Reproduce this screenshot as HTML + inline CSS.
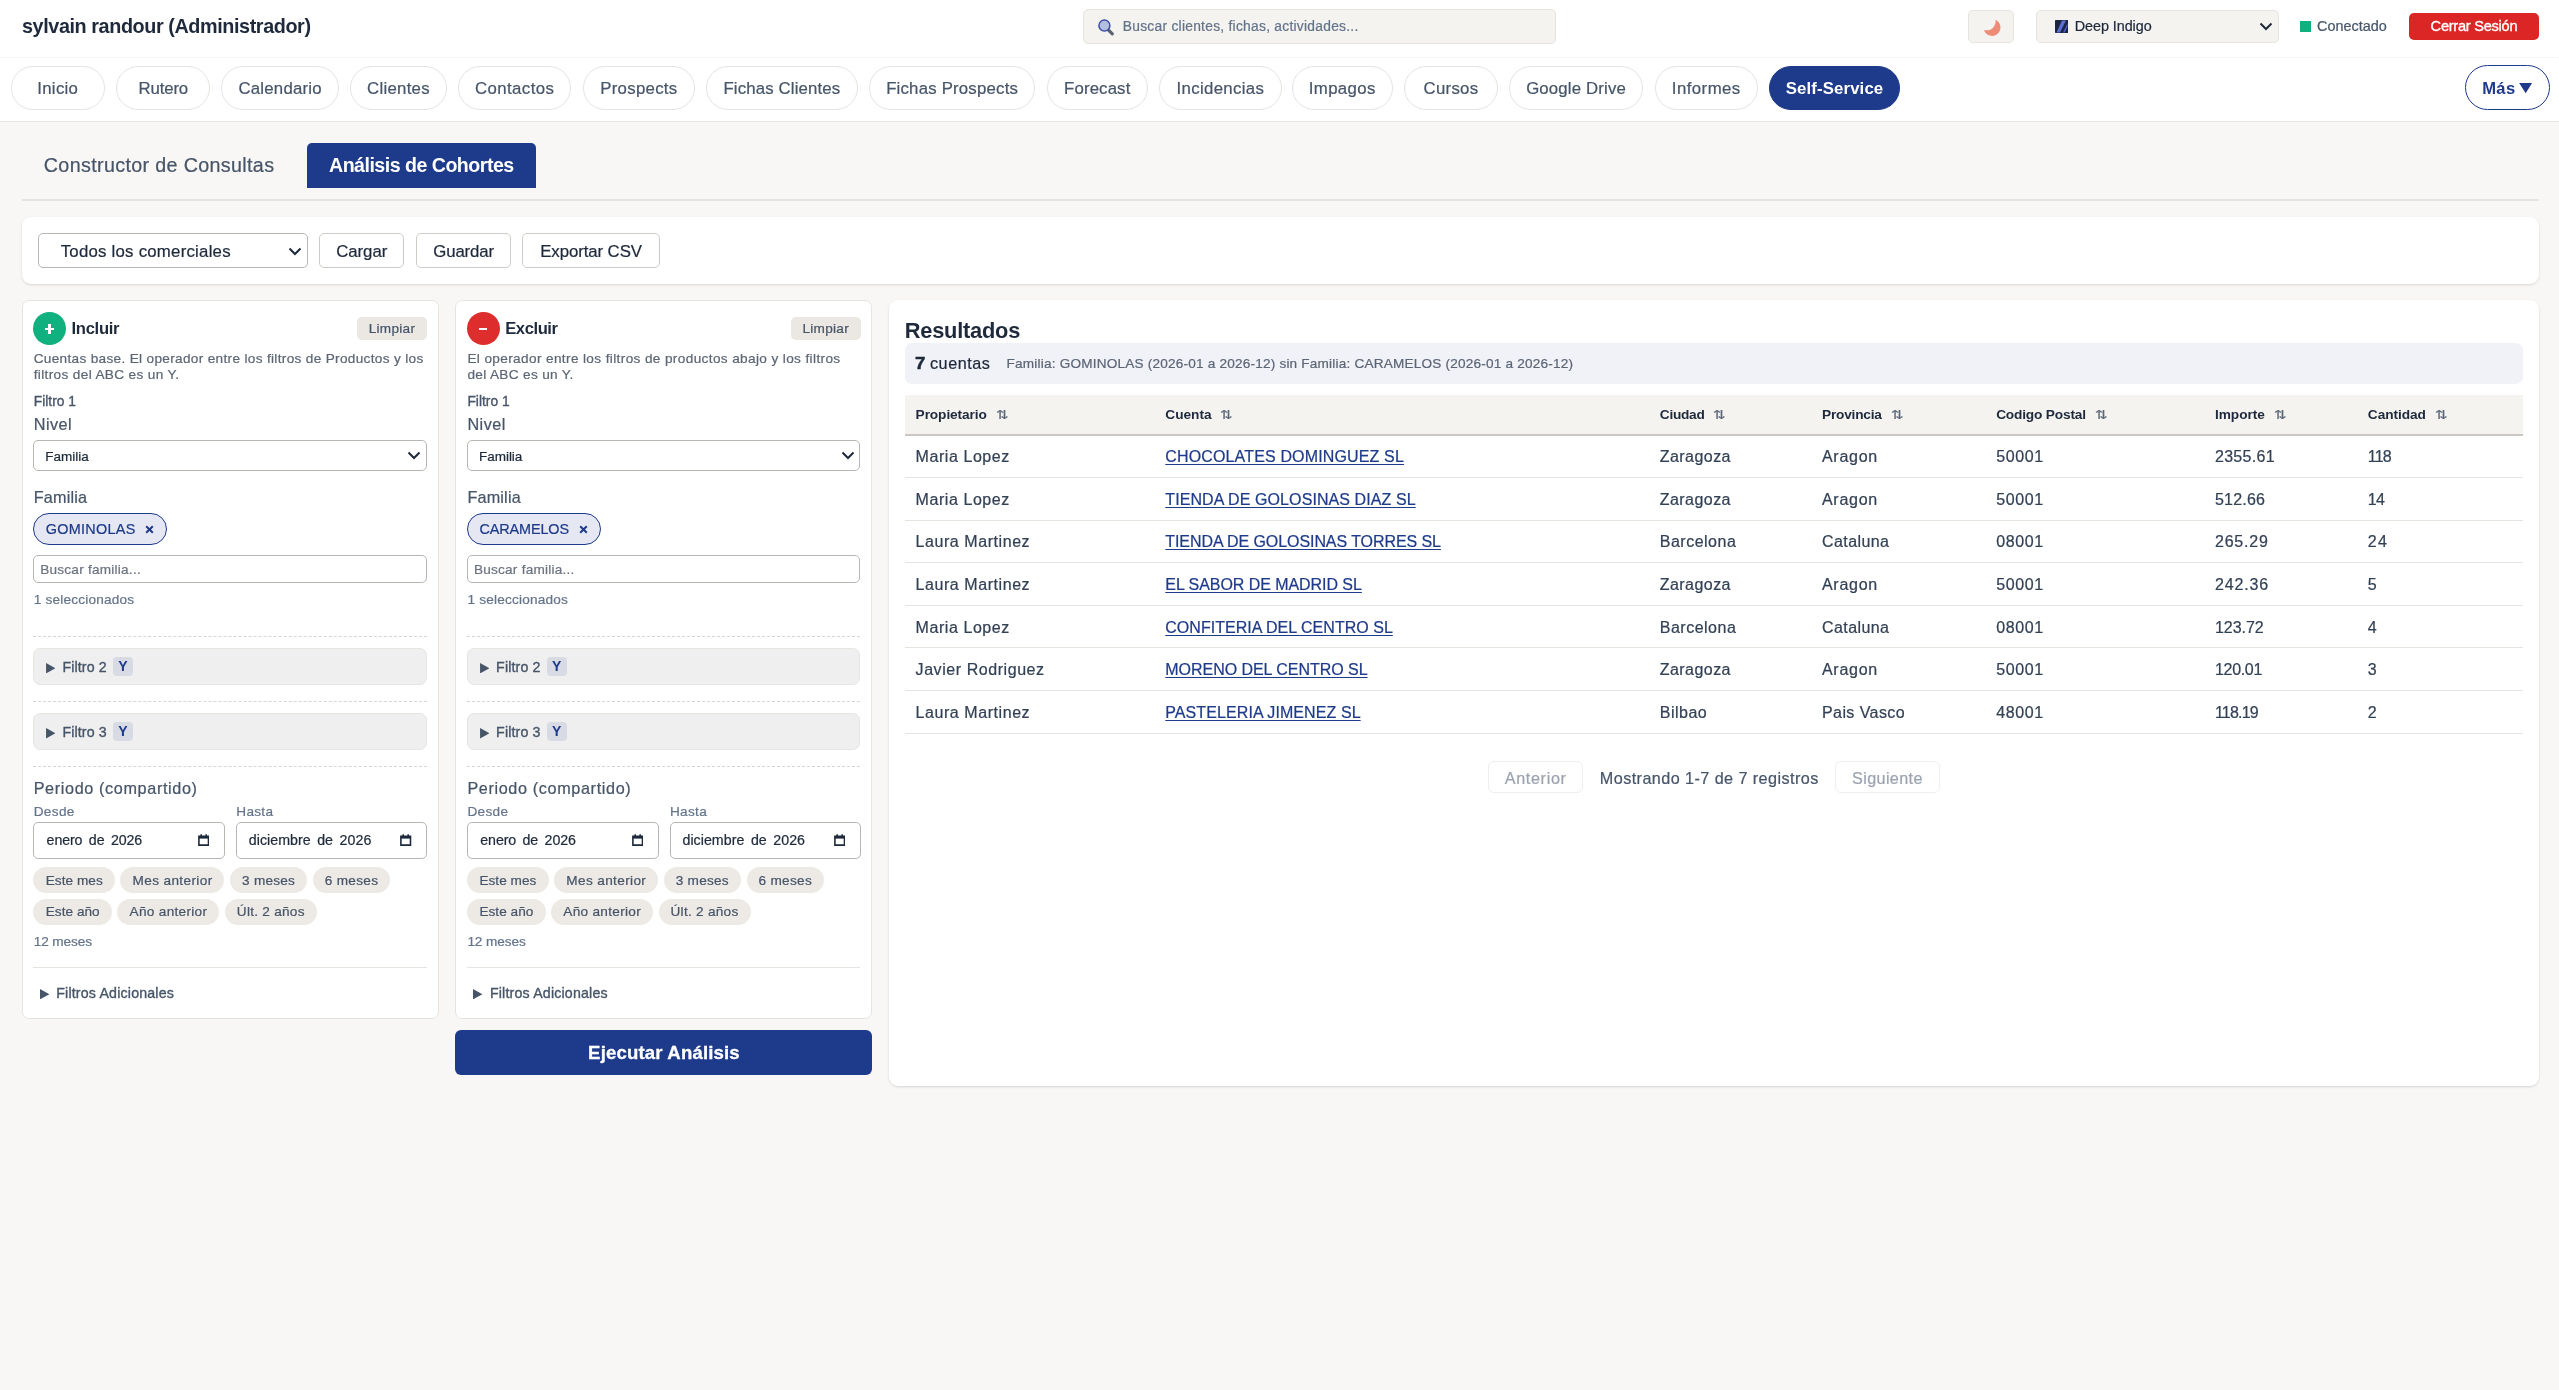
<!DOCTYPE html>
<html lang="es">
<head>
<meta charset="utf-8">
<title>Self-Service - Análisis de Cohortes</title>
<style>
*{box-sizing:border-box;margin:0;padding:0}
html,body{width:2559px;height:1390px;overflow:hidden}
body{background:#f8f7f5;font-family:"Liberation Sans",sans-serif;color:#1e293b;position:relative}
#app{position:absolute;left:0;top:0;width:2559px;height:1390px;will-change:transform;-webkit-text-stroke:0.22px currentColor}
h1,h2,h3,b,th,.pill.active,.pill.more,.ybadge,.nb{-webkit-text-stroke:0}
.abs{position:absolute}
.md{-webkit-text-stroke:0.35px currentColor}
header.top{position:absolute;left:0;top:0;width:2559px;height:58px;background:#fff;border-bottom:1px dotted #f1efec}
nav.main{position:absolute;left:0;top:58px;width:2559px;height:64px;background:#fff;border-bottom:1.5px solid #e7e4df}
.pill{position:absolute;top:8px;height:44px;border:1.5px solid #e7e4df;border-radius:22px;background:#fff;color:#475569;font-size:16.8px;line-height:43px;text-align:center;white-space:pre;text-decoration:none}
.pill.active{background:#1e3a8a;border-color:#1e3a8a;color:#fff;font-weight:700}
.pill.more{border:1.5px solid #1e3a8a;border-radius:23px;color:#1e3a8a;font-weight:700}
.box{position:absolute;background:#f5f3f0;border:1px solid #e7e4df;border-radius:5px}
.btn{position:absolute;background:#fff;border:1px solid #cfccc7;border-radius:5px;text-align:center;color:#1e293b;white-space:pre}
.card{position:absolute;background:#fff;border-radius:9px;box-shadow:0 1px 3px rgba(0,0,0,.10),0 1px 2px rgba(0,0,0,.05)}
.panel{position:absolute;background:#fff;border:1px solid #e7e4df;border-radius:7px}
.sel{position:absolute;background:#fff;border:1px solid #b9b6b1;border-radius:5px}
.chip{position:absolute;height:26px;border-radius:13px;background:#edeae6;color:#475569;font-size:13.6px;line-height:26px;text-align:center;white-space:pre}
.dash{position:absolute;height:0;border-top:1px dashed #d9d6d1}
.fbox{position:absolute;background:#efefef;border:1px solid #e9e5e1;border-radius:7px}
.ybadge{position:absolute;background:#d8dae4;border-radius:4px;color:#1e3a8a;font-weight:700;font-size:14px;text-align:center}
table.res{position:absolute;border-collapse:collapse;table-layout:fixed}
table.res th{background:#f4f3f0;text-align:left;font-size:13.7px;font-weight:700;color:#1e293b;height:40px;padding:0 0 0 10.6px;border-bottom:2px solid #cbc8c3;white-space:pre}
table.res td{font-size:16px;color:#334155;height:42.6px;padding:2px 0 0 10.6px;border-bottom:1px solid #e7e4df;white-space:pre}
table.res td a{color:#1e3a8a;text-decoration:underline;text-underline-offset:1.5px}
.sort{display:inline-block;color:#5b6678;font-weight:400;font-size:15px;line-height:1;margin-left:8.8px;transform:scaleY(.8);transform-origin:50% 55%;-webkit-text-stroke:0.25px #5b6678;vertical-align:-1px}
</style>
</head>
<body>
<div id="app">

<header class="top">
<h1 class="nb" style="position:absolute;left:22.0px;top:12.3px;height:28px;line-height:28px;font-size:19.8px;font-weight:700;color:#1e293b;letter-spacing:-0.406px;white-space:pre;">sylvain randour (Administrador)</h1>
<div class="box" style="left:1083px;top:9px;width:473px;height:35px"></div>
<svg class="abs" style="left:1096px;top:17px" width="20" height="20" viewBox="0 0 20 20"><path d="M12.3 12.8 L16.3 16.8" stroke="#5a6273" stroke-width="3.2" stroke-linecap="round"/><circle cx="8.4" cy="8.6" r="5.5" fill="#b4bedd" stroke="#3d51a8" stroke-width="1.5"/></svg>
<span style="position:absolute;left:1122.8px;top:16.6px;height:19px;line-height:19px;font-size:13.8px;font-weight:400;color:#64748b;letter-spacing:0.264px;white-space:pre;">Buscar clientes, fichas, actividades...</span>
<div class="box" style="left:1968px;top:10px;width:45.5px;height:33px"></div>
<svg class="abs" style="left:1980px;top:16px" width="24" height="24" viewBox="1980 16 24 24"><path d="M1995.4 19.8 A8.4 8.4 0 1 1 1984 29.9 A8.8 8.8 0 0 0 1995.4 19.8 Z" fill="#ef8c78"/></svg>
<div class="box" style="left:2036px;top:10px;width:243px;height:33px"></div>
<svg class="abs" style="left:2055px;top:20px" width="13.2" height="13" viewBox="0 0 13.2 13"><rect width="13.2" height="13" rx="0.8" fill="#1c2440"/><path d="M1.5 12.5 L7 0.5 L11 0.5 L5 12.5 Z" fill="#5b70d2"/><path d="M8 12.5 L12.6 3 L12.6 6.5 L9.8 12.5 Z" fill="#4a5fc4"/></svg>
<span style="position:absolute;left:2074.7px;top:16.3px;height:20px;line-height:20px;font-size:14.4px;font-weight:400;color:#1e293b;letter-spacing:-0.062px;white-space:pre;">Deep Indigo</span>
<svg class="abs" style="left:2259px;top:22px" width="14" height="9" viewBox="0 0 14 9"><path d="M1.5 1.5 L7 7 L12.5 1.5" fill="none" stroke="#1e293b" stroke-width="2"/></svg>
<div class="abs" style="left:2300px;top:21.3px;width:10.8px;height:10.4px;background:#10b17e"></div>
<span style="position:absolute;left:2317.0px;top:16.3px;height:20px;line-height:20px;font-size:14.4px;font-weight:400;color:#475569;letter-spacing:0.024px;white-space:pre;">Conectado</span>
<div class="abs" style="left:2409px;top:13px;width:130px;height:26.7px;background:#dc2626;border-radius:5px"></div>
<span class="md" style="position:absolute;left:2430.6px;top:16.3px;height:20px;line-height:20px;font-size:14.6px;font-weight:400;color:#fff;letter-spacing:-0.253px;white-space:pre;">Cerrar Sesión</span>
</header>
<nav class="main">
<a class="pill" style="left:11px;width:93.5px;letter-spacing:0.312px">Inicio</a>
<a class="pill" style="left:116.25px;width:94.0px;letter-spacing:-0.125px">Rutero</a>
<a class="pill" style="left:221px;width:118.25px;letter-spacing:0.203px">Calendario</a>
<a class="pill" style="left:350px;width:97px;letter-spacing:0.266px">Clientes</a>
<a class="pill" style="left:458px;width:113.25px;letter-spacing:0.43px">Contactos</a>
<a class="pill" style="left:583.25px;width:111.25px;letter-spacing:0.297px">Prospects</a>
<a class="pill" style="left:706.25px;width:151.25px;letter-spacing:0.145px">Fichas Clientes</a>
<a class="pill" style="left:869.25px;width:165.75px;letter-spacing:0.203px">Fichas Prospects</a>
<a class="pill" style="left:1047px;width:100.5px;letter-spacing:0.136px">Forecast</a>
<a class="pill" style="left:1159.25px;width:122.25px;letter-spacing:0.353px">Incidencias</a>
<a class="pill" style="left:1292px;width:100.5px;letter-spacing:0.354px">Impagos</a>
<a class="pill" style="left:1404px;width:94px;letter-spacing:0.269px">Cursos</a>
<a class="pill" style="left:1509px;width:134.25px;letter-spacing:0.165px">Google Drive</a>
<a class="pill" style="left:1655px;width:102.5px;letter-spacing:0.458px">Informes</a>
<a class="pill active" style="left:1769px;width:131px;letter-spacing:0.128px">Self-Service</a>
<a class="pill more" style="left:2465px;width:85px;top:6.8px;height:45.2px"></a>
<span class="nb" style="position:absolute;left:2482.2px;top:19.3px;height:23px;line-height:23px;font-size:16.6px;font-weight:700;color:#1e3a8a;letter-spacing:0.359px;white-space:pre;">Más</span>
<span class="nb" style="position:absolute;left:2514.8px;top:17.8px;height:20px;line-height:20px;font-size:22px;color:#1e3a8a;transform:scaleY(.8);transform-origin:50% 85%">▼</span>
</nav>
<span style="position:absolute;left:43.8px;top:150.8px;height:28px;line-height:28px;font-size:19.7px;font-weight:400;color:#475569;letter-spacing:0.35px;white-space:pre;">Constructor de Consultas</span>
<div class="abs" style="left:307px;top:143.2px;width:229px;height:44.6px;background:#1e3a8a;border-radius:5px 5px 0 0"></div>
<span class="nb" style="position:absolute;left:329.0px;top:151.9px;height:27px;line-height:27px;font-size:19.6px;font-weight:700;color:#fff;letter-spacing:-0.511px;white-space:pre;">Análisis de Cohortes</span>
<div class="abs" style="left:22px;top:199px;width:2516.5px;height:2px;background:#e7e4df"></div>
<div class="card" style="left:22px;top:217px;width:2516.5px;height:66.5px"></div>
<div class="sel" style="left:38.3px;top:233.4px;width:269.4px;height:34.3px"></div>
<span style="position:absolute;left:60.7px;top:239.6px;height:24px;line-height:24px;font-size:16.8px;font-weight:400;color:#1e293b;letter-spacing:0.24px;white-space:pre;">Todos los comerciales</span>
<svg class="abs" style="left:288px;top:246.5px" width="14" height="9" viewBox="0 0 14 9"><path d="M1.5 1.5 L7 7 L12.5 1.5" fill="none" stroke="#1e293b" stroke-width="2"/></svg>
<div class="btn" style="left:319.2px;top:233.4px;width:85.3px;height:34.3px"></div>
<span style="position:absolute;left:336.2px;top:239.6px;height:24px;line-height:24px;font-size:16.8px;font-weight:400;color:#1e293b;letter-spacing:-0.039px;white-space:pre;">Cargar</span>
<div class="btn" style="left:416.3px;top:233.4px;width:95.2px;height:34.3px"></div>
<span style="position:absolute;left:433.3px;top:239.6px;height:24px;line-height:24px;font-size:16.8px;font-weight:400;color:#1e293b;letter-spacing:-0.144px;white-space:pre;">Guardar</span>
<div class="btn" style="left:522.2px;top:233.4px;width:137.5px;height:34.3px"></div>
<span style="position:absolute;left:540.2px;top:239.6px;height:24px;line-height:24px;font-size:16.8px;font-weight:400;color:#1e293b;letter-spacing:-0.072px;white-space:pre;">Exportar CSV</span>
<section class="panel" style="left:22px;top:300px;width:417px;height:718.5px"></section>
<div class="abs" style="left:32.9px;top:312px;width:33px;height:33px;border-radius:50%;background:#10b17e"></div>
<div class="abs" style="left:44.6px;top:327.6px;width:9.6px;height:2.6px;background:#fff"></div><div class="abs" style="left:48.1px;top:324.1px;width:2.6px;height:9.6px;background:#fff"></div>
<h3 class="nb" style="position:absolute;left:71.5px;top:316.8px;height:23px;line-height:23px;font-size:16.6px;font-weight:700;color:#1e293b;letter-spacing:-0.299px;white-space:pre;">Incluir</h3>
<div class="abs" style="left:357px;top:317.3px;width:70px;height:22.6px;background:#ebe8e3;border-radius:5px"></div>
<span style="position:absolute;left:368.7px;top:319.0px;height:19px;line-height:19px;font-size:13.6px;font-weight:400;color:#475569;letter-spacing:0.287px;white-space:pre;">Limpiar</span>
<span style="position:absolute;left:33.7px;top:348.8px;height:19px;line-height:19px;font-size:13.6px;font-weight:400;color:#5c6676;letter-spacing:0.328px;white-space:pre;">Cuentas base. El operador entre los filtros de Productos y los</span>
<span style="position:absolute;left:33.7px;top:364.8px;height:19px;line-height:19px;font-size:13.6px;font-weight:400;color:#5c6676;letter-spacing:0.36px;white-space:pre;">filtros del ABC es un Y.</span>
<span class="md" style="position:absolute;left:33.7px;top:391.5px;height:19px;line-height:19px;font-size:13.8px;font-weight:400;color:#475569;letter-spacing:0.018px;white-space:pre;">Filtro 1</span>
<span style="position:absolute;left:33.7px;top:413.0px;height:23px;line-height:23px;font-size:16.2px;font-weight:400;color:#475569;letter-spacing:0.504px;white-space:pre;">Nivel</span>
<div class="sel" style="left:33.2px;top:440px;width:393.5px;height:30.6px"></div>
<span style="position:absolute;left:45.2px;top:446.7px;height:19px;line-height:19px;font-size:13.5px;font-weight:400;color:#1e293b;letter-spacing:-0.003px;white-space:pre;">Familia</span>
<svg class="abs" style="left:407px;top:451.2px" width="14" height="9" viewBox="0 0 14 9"><path d="M1.5 1.5 L7 7 L12.5 1.5" fill="none" stroke="#1e293b" stroke-width="2"/></svg>
<span style="position:absolute;left:33.7px;top:485.8px;height:23px;line-height:23px;font-size:16.2px;font-weight:400;color:#475569;letter-spacing:0.188px;white-space:pre;">Familia</span>
<div class="abs" style="left:32.9px;top:513px;width:134.1px;height:31.7px;border:1.5px solid #1e3a8a;border-radius:16px;background:#e5e7f3"></div>
<span style="position:absolute;left:45.7px;top:518.6px;height:20px;line-height:20px;font-size:14.4px;font-weight:400;color:#1e3a8a;letter-spacing:0.316px;white-space:pre;">GOMINOLAS</span>
<svg class="abs" style="left:144.8px;top:525.4px" width="9" height="9" viewBox="0 0 9 9"><path d="M1.2 1.2 L7.8 7.8 M7.8 1.2 L1.2 7.8" stroke="#1e3a8a" stroke-width="2"/></svg>
<div class="sel" style="left:33.2px;top:555.3px;width:393.5px;height:27.3px"></div>
<span style="position:absolute;left:40.2px;top:559.5px;height:19px;line-height:19px;font-size:13.6px;font-weight:400;color:#6b7280;letter-spacing:0.237px;white-space:pre;">Buscar familia...</span>
<span style="position:absolute;left:33.7px;top:589.7px;height:19px;line-height:19px;font-size:13.6px;font-weight:400;color:#64748b;letter-spacing:0.207px;white-space:pre;">1 seleccionados</span>
<div class="dash" style="left:33.2px;top:636px;width:393.5px"></div>
<div class="fbox" style="left:33.2px;top:648.1px;width:393.5px;height:36.8px"></div>
<svg class="abs" style="left:45.8px;top:663.1px" width="9.6" height="10.4" viewBox="0 0 10 11"><path d="M0 0 L10 5.5 L0 11 Z" fill="#475569"/></svg>
<span class="md" style="position:absolute;left:62.4px;top:657.3px;height:20px;line-height:20px;font-size:14.2px;font-weight:400;color:#475569;letter-spacing:0.134px;white-space:pre;">Filtro 2</span>
<div class="ybadge" style="left:112.9px;top:657.3000000000001px;width:20px;height:18.8px;line-height:18.8px">Y</div>
<div class="dash" style="left:33.2px;top:701px;width:393.5px"></div>
<div class="fbox" style="left:33.2px;top:713.2px;width:393.5px;height:36.8px"></div>
<svg class="abs" style="left:45.8px;top:728.2px" width="9.6" height="10.4" viewBox="0 0 10 11"><path d="M0 0 L10 5.5 L0 11 Z" fill="#475569"/></svg>
<span class="md" style="position:absolute;left:62.4px;top:722.4px;height:20px;line-height:20px;font-size:14.2px;font-weight:400;color:#475569;letter-spacing:0.134px;white-space:pre;">Filtro 3</span>
<div class="ybadge" style="left:112.9px;top:722.4000000000001px;width:20px;height:18.8px;line-height:18.8px">Y</div>
<div class="dash" style="left:33.2px;top:766px;width:393.5px"></div>
<span style="position:absolute;left:33.7px;top:776.8px;height:23px;line-height:23px;font-size:16.2px;font-weight:400;color:#475569;letter-spacing:0.639px;white-space:pre;">Periodo (compartido)</span>
<span style="position:absolute;left:33.7px;top:801.7px;height:19px;line-height:19px;font-size:13.6px;font-weight:400;color:#64748b;letter-spacing:0.351px;white-space:pre;">Desde</span>
<span style="position:absolute;left:236.3px;top:801.7px;height:19px;line-height:19px;font-size:13.6px;font-weight:400;color:#64748b;letter-spacing:0.296px;white-space:pre;">Hasta</span>
<div class="sel" style="left:33px;top:822px;width:192px;height:36.6px"></div>
<span style="position:absolute;left:46.6px;top:830.4px;height:20px;line-height:20px;font-size:14.2px;font-weight:400;color:#1e293b;letter-spacing:-0.093px;white-space:pre;word-spacing:2.6px;">enero de 2026</span>
<svg class="abs" style="left:198px;top:834.3px" width="11.4" height="12" viewBox="0 0 11.4 12"><path d="M0.9 2.2 H10.5 V11.1 H0.9 Z" fill="none" stroke="#1e293b" stroke-width="1.6"/><rect x="0.9" y="2" width="9.6" height="2.6" fill="#1e293b"/><rect x="2.4" y="0.3" width="1.6" height="2.4" fill="#1e293b"/><rect x="7.4" y="0.3" width="1.6" height="2.4" fill="#1e293b"/></svg>
<div class="sel" style="left:236px;top:822px;width:191px;height:36.6px"></div>
<span style="position:absolute;left:248.8px;top:830.4px;height:20px;line-height:20px;font-size:14.2px;font-weight:400;color:#1e293b;letter-spacing:0.035px;white-space:pre;word-spacing:2.6px;">diciembre de 2026</span>
<svg class="abs" style="left:400.3px;top:834.3px" width="11.4" height="12" viewBox="0 0 11.4 12"><path d="M0.9 2.2 H10.5 V11.1 H0.9 Z" fill="none" stroke="#1e293b" stroke-width="1.6"/><rect x="0.9" y="2" width="9.6" height="2.6" fill="#1e293b"/><rect x="2.4" y="0.3" width="1.6" height="2.4" fill="#1e293b"/><rect x="7.4" y="0.3" width="1.6" height="2.4" fill="#1e293b"/></svg>
<div class="chip" style="left:32.9px;top:867.2px;width:82.1px"></div>
<span style="position:absolute;left:45.7px;top:870.6px;height:19px;line-height:19px;font-size:13.6px;font-weight:400;color:#475569;letter-spacing:0.047px;white-space:pre;">Este mes</span>
<div class="chip" style="left:119.9px;top:867.2px;width:104.1px"></div>
<span style="position:absolute;left:132.6px;top:870.6px;height:19px;line-height:19px;font-size:13.6px;font-weight:400;color:#475569;letter-spacing:0.367px;white-space:pre;">Mes anterior</span>
<div class="chip" style="left:229.8px;top:867.2px;width:77.4px"></div>
<span style="position:absolute;left:242.1px;top:870.6px;height:19px;line-height:19px;font-size:13.6px;font-weight:400;color:#475569;letter-spacing:0.237px;white-space:pre;">3 meses</span>
<div class="chip" style="left:312.8px;top:867.2px;width:77.0px"></div>
<span style="position:absolute;left:324.8px;top:870.6px;height:19px;line-height:19px;font-size:13.6px;font-weight:400;color:#475569;letter-spacing:0.304px;white-space:pre;">6 meses</span>
<div class="chip" style="left:32.9px;top:899px;width:79.1px"></div>
<span style="position:absolute;left:45.7px;top:902.4px;height:19px;line-height:19px;font-size:13.6px;font-weight:400;color:#475569;letter-spacing:0.047px;white-space:pre;">Este año</span>
<div class="chip" style="left:116.9px;top:899px;width:102.3px"></div>
<span style="position:absolute;left:129.6px;top:902.4px;height:19px;line-height:19px;font-size:13.6px;font-weight:400;color:#475569;letter-spacing:0.303px;white-space:pre;">Año anterior</span>
<div class="chip" style="left:224.9px;top:899px;width:92.3px"></div>
<span style="position:absolute;left:236.8px;top:902.4px;height:19px;line-height:19px;font-size:13.6px;font-weight:400;color:#475569;letter-spacing:0.272px;white-space:pre;">Últ. 2 años</span>
<span style="position:absolute;left:33.7px;top:932.0px;height:19px;line-height:19px;font-size:13.6px;font-weight:400;color:#64748b;letter-spacing:-0.077px;white-space:pre;">12 meses</span>
<div class="abs" style="left:33.2px;top:967px;width:393.5px;height:1px;background:#e7e4df"></div>
<svg class="abs" style="left:39.5px;top:988.8px" width="9.4" height="10.4" viewBox="0 0 10 11"><path d="M0 0 L10 5.5 L0 11 Z" fill="#475569"/></svg>
<span class="md" style="position:absolute;left:56.2px;top:983.4px;height:20px;line-height:20px;font-size:14.2px;font-weight:400;color:#475569;letter-spacing:0.186px;white-space:pre;">Filtros Adicionales</span>
<section class="panel" style="left:455.3px;top:300px;width:417px;height:718.5px"></section>
<div class="abs" style="left:466.59999999999997px;top:312px;width:33px;height:33px;border-radius:50%;background:#de2d2d"></div>
<div class="abs" style="left:479.4px;top:327.6px;width:7.4px;height:2.4px;background:#fff"></div>
<h3 class="nb" style="position:absolute;left:505.2px;top:316.8px;height:23px;line-height:23px;font-size:16.6px;font-weight:700;color:#1e293b;letter-spacing:-0.424px;white-space:pre;">Excluir</h3>
<div class="abs" style="left:790.7px;top:317.3px;width:70px;height:22.6px;background:#ebe8e3;border-radius:5px"></div>
<span style="position:absolute;left:802.4px;top:319.0px;height:19px;line-height:19px;font-size:13.6px;font-weight:400;color:#475569;letter-spacing:0.287px;white-space:pre;">Limpiar</span>
<span style="position:absolute;left:467.4px;top:348.8px;height:19px;line-height:19px;font-size:13.6px;font-weight:400;color:#5c6676;letter-spacing:0.376px;white-space:pre;">El operador entre los filtros de productos abajo y los filtros</span>
<span style="position:absolute;left:467.4px;top:364.8px;height:19px;line-height:19px;font-size:13.6px;font-weight:400;color:#5c6676;letter-spacing:0.341px;white-space:pre;">del ABC es un Y.</span>
<span class="md" style="position:absolute;left:467.4px;top:391.5px;height:19px;line-height:19px;font-size:13.8px;font-weight:400;color:#475569;letter-spacing:0.018px;white-space:pre;">Filtro 1</span>
<span style="position:absolute;left:467.4px;top:413.0px;height:23px;line-height:23px;font-size:16.2px;font-weight:400;color:#475569;letter-spacing:0.504px;white-space:pre;">Nivel</span>
<div class="sel" style="left:466.9px;top:440px;width:393.5px;height:30.6px"></div>
<span style="position:absolute;left:478.9px;top:446.7px;height:19px;line-height:19px;font-size:13.5px;font-weight:400;color:#1e293b;letter-spacing:-0.003px;white-space:pre;">Familia</span>
<svg class="abs" style="left:840.7px;top:451.2px" width="14" height="9" viewBox="0 0 14 9"><path d="M1.5 1.5 L7 7 L12.5 1.5" fill="none" stroke="#1e293b" stroke-width="2"/></svg>
<span style="position:absolute;left:467.4px;top:485.8px;height:23px;line-height:23px;font-size:16.2px;font-weight:400;color:#475569;letter-spacing:0.188px;white-space:pre;">Familia</span>
<div class="abs" style="left:466.59999999999997px;top:513px;width:134.1px;height:31.7px;border:1.5px solid #1e3a8a;border-radius:16px;background:#e5e7f3"></div>
<span style="position:absolute;left:479.4px;top:518.6px;height:20px;line-height:20px;font-size:14.4px;font-weight:400;color:#1e3a8a;letter-spacing:-0.084px;white-space:pre;">CARAMELOS</span>
<svg class="abs" style="left:578.5px;top:525.4px" width="9" height="9" viewBox="0 0 9 9"><path d="M1.2 1.2 L7.8 7.8 M7.8 1.2 L1.2 7.8" stroke="#1e3a8a" stroke-width="2"/></svg>
<div class="sel" style="left:466.9px;top:555.3px;width:393.5px;height:27.3px"></div>
<span style="position:absolute;left:473.9px;top:559.5px;height:19px;line-height:19px;font-size:13.6px;font-weight:400;color:#6b7280;letter-spacing:0.237px;white-space:pre;">Buscar familia...</span>
<span style="position:absolute;left:467.4px;top:589.7px;height:19px;line-height:19px;font-size:13.6px;font-weight:400;color:#64748b;letter-spacing:0.207px;white-space:pre;">1 seleccionados</span>
<div class="dash" style="left:466.9px;top:636px;width:393.5px"></div>
<div class="fbox" style="left:466.9px;top:648.1px;width:393.5px;height:36.8px"></div>
<svg class="abs" style="left:479.5px;top:663.1px" width="9.6" height="10.4" viewBox="0 0 10 11"><path d="M0 0 L10 5.5 L0 11 Z" fill="#475569"/></svg>
<span class="md" style="position:absolute;left:496.1px;top:657.3px;height:20px;line-height:20px;font-size:14.2px;font-weight:400;color:#475569;letter-spacing:0.134px;white-space:pre;">Filtro 2</span>
<div class="ybadge" style="left:546.6px;top:657.3000000000001px;width:20px;height:18.8px;line-height:18.8px">Y</div>
<div class="dash" style="left:466.9px;top:701px;width:393.5px"></div>
<div class="fbox" style="left:466.9px;top:713.2px;width:393.5px;height:36.8px"></div>
<svg class="abs" style="left:479.5px;top:728.2px" width="9.6" height="10.4" viewBox="0 0 10 11"><path d="M0 0 L10 5.5 L0 11 Z" fill="#475569"/></svg>
<span class="md" style="position:absolute;left:496.1px;top:722.4px;height:20px;line-height:20px;font-size:14.2px;font-weight:400;color:#475569;letter-spacing:0.134px;white-space:pre;">Filtro 3</span>
<div class="ybadge" style="left:546.6px;top:722.4000000000001px;width:20px;height:18.8px;line-height:18.8px">Y</div>
<div class="dash" style="left:466.9px;top:766px;width:393.5px"></div>
<span style="position:absolute;left:467.4px;top:776.8px;height:23px;line-height:23px;font-size:16.2px;font-weight:400;color:#475569;letter-spacing:0.639px;white-space:pre;">Periodo (compartido)</span>
<span style="position:absolute;left:467.4px;top:801.7px;height:19px;line-height:19px;font-size:13.6px;font-weight:400;color:#64748b;letter-spacing:0.351px;white-space:pre;">Desde</span>
<span style="position:absolute;left:670.0px;top:801.7px;height:19px;line-height:19px;font-size:13.6px;font-weight:400;color:#64748b;letter-spacing:0.296px;white-space:pre;">Hasta</span>
<div class="sel" style="left:466.7px;top:822px;width:192px;height:36.6px"></div>
<span style="position:absolute;left:480.3px;top:830.4px;height:20px;line-height:20px;font-size:14.2px;font-weight:400;color:#1e293b;letter-spacing:-0.093px;white-space:pre;word-spacing:2.6px;">enero de 2026</span>
<svg class="abs" style="left:631.7px;top:834.3px" width="11.4" height="12" viewBox="0 0 11.4 12"><path d="M0.9 2.2 H10.5 V11.1 H0.9 Z" fill="none" stroke="#1e293b" stroke-width="1.6"/><rect x="0.9" y="2" width="9.6" height="2.6" fill="#1e293b"/><rect x="2.4" y="0.3" width="1.6" height="2.4" fill="#1e293b"/><rect x="7.4" y="0.3" width="1.6" height="2.4" fill="#1e293b"/></svg>
<div class="sel" style="left:669.7px;top:822px;width:191px;height:36.6px"></div>
<span style="position:absolute;left:682.5px;top:830.4px;height:20px;line-height:20px;font-size:14.2px;font-weight:400;color:#1e293b;letter-spacing:0.035px;white-space:pre;word-spacing:2.6px;">diciembre de 2026</span>
<svg class="abs" style="left:834.0px;top:834.3px" width="11.4" height="12" viewBox="0 0 11.4 12"><path d="M0.9 2.2 H10.5 V11.1 H0.9 Z" fill="none" stroke="#1e293b" stroke-width="1.6"/><rect x="0.9" y="2" width="9.6" height="2.6" fill="#1e293b"/><rect x="2.4" y="0.3" width="1.6" height="2.4" fill="#1e293b"/><rect x="7.4" y="0.3" width="1.6" height="2.4" fill="#1e293b"/></svg>
<div class="chip" style="left:466.59999999999997px;top:867.2px;width:82.1px"></div>
<span style="position:absolute;left:479.4px;top:870.6px;height:19px;line-height:19px;font-size:13.6px;font-weight:400;color:#475569;letter-spacing:0.047px;white-space:pre;">Este mes</span>
<div class="chip" style="left:553.6px;top:867.2px;width:104.1px"></div>
<span style="position:absolute;left:566.3px;top:870.6px;height:19px;line-height:19px;font-size:13.6px;font-weight:400;color:#475569;letter-spacing:0.367px;white-space:pre;">Mes anterior</span>
<div class="chip" style="left:663.5px;top:867.2px;width:77.4px"></div>
<span style="position:absolute;left:675.8px;top:870.6px;height:19px;line-height:19px;font-size:13.6px;font-weight:400;color:#475569;letter-spacing:0.237px;white-space:pre;">3 meses</span>
<div class="chip" style="left:746.5px;top:867.2px;width:77.0px"></div>
<span style="position:absolute;left:758.5px;top:870.6px;height:19px;line-height:19px;font-size:13.6px;font-weight:400;color:#475569;letter-spacing:0.304px;white-space:pre;">6 meses</span>
<div class="chip" style="left:466.59999999999997px;top:899px;width:79.1px"></div>
<span style="position:absolute;left:479.4px;top:902.4px;height:19px;line-height:19px;font-size:13.6px;font-weight:400;color:#475569;letter-spacing:0.047px;white-space:pre;">Este año</span>
<div class="chip" style="left:550.6px;top:899px;width:102.3px"></div>
<span style="position:absolute;left:563.3px;top:902.4px;height:19px;line-height:19px;font-size:13.6px;font-weight:400;color:#475569;letter-spacing:0.303px;white-space:pre;">Año anterior</span>
<div class="chip" style="left:658.6px;top:899px;width:92.3px"></div>
<span style="position:absolute;left:670.5px;top:902.4px;height:19px;line-height:19px;font-size:13.6px;font-weight:400;color:#475569;letter-spacing:0.272px;white-space:pre;">Últ. 2 años</span>
<span style="position:absolute;left:467.4px;top:932.0px;height:19px;line-height:19px;font-size:13.6px;font-weight:400;color:#64748b;letter-spacing:-0.077px;white-space:pre;">12 meses</span>
<div class="abs" style="left:466.9px;top:967px;width:393.5px;height:1px;background:#e7e4df"></div>
<svg class="abs" style="left:473.2px;top:988.8px" width="9.4" height="10.4" viewBox="0 0 10 11"><path d="M0 0 L10 5.5 L0 11 Z" fill="#475569"/></svg>
<span class="md" style="position:absolute;left:489.9px;top:983.4px;height:20px;line-height:20px;font-size:14.2px;font-weight:400;color:#475569;letter-spacing:0.186px;white-space:pre;">Filtros Adicionales</span>
<div class="abs" style="left:455.2px;top:1030.1px;width:416.7px;height:44.7px;background:#1e3a8a;border-radius:6px"></div>
<span class="nb" style="position:absolute;left:588.1px;top:1040.3px;height:26px;line-height:26px;font-size:18.6px;font-weight:700;color:#fff;letter-spacing:0.152px;white-space:pre;-webkit-text-stroke:0.3px #fff;">Ejecutar Análisis</span>
<section class="card" style="left:889px;top:300px;width:1649.7px;height:785.5px"></section>
<h2 class="nb" style="position:absolute;left:904.8px;top:314.7px;height:31px;line-height:31px;font-size:21.8px;font-weight:700;color:#1e293b;letter-spacing:-0.222px;white-space:pre;">Resultados</h2>
<div class="abs" style="left:905px;top:343.1px;width:1617.8px;height:40.7px;background:#f1f2f8;border-radius:7px"></div>
<span class="nb" style="position:absolute;left:915.4px;top:351.6px;height:24px;line-height:24px;font-size:17px;font-weight:700;color:#1e293b;letter-spacing:0.431px;white-space:pre;-webkit-text-stroke:0.5px #1e293b;transform:scaleX(1.1);transform-origin:0 50%;">7</span>
<span style="position:absolute;left:930.0px;top:352.1px;height:23px;line-height:23px;font-size:16.2px;font-weight:400;color:#1e293b;letter-spacing:0.516px;white-space:pre;">cuentas</span>
<span style="position:absolute;left:1006.6px;top:353.9px;height:19px;line-height:19px;font-size:13.6px;font-weight:400;color:#5c6676;letter-spacing:0.195px;white-space:pre;">Familia: GOMINOLAS (2026-01 a 2026-12) sin Familia: CARAMELOS (2026-01 a 2026-12)</span>
<table class="res" style="left:905px;top:394.9px;width:1617.8px"><colgroup><col style="width:249.7px"><col style="width:494.5px"><col style="width:162.2px"><col style="width:174.2px"><col style="width:218.8px"><col style="width:152.9px"><col style="width:165.5px"></colgroup>
<thead><tr><th><span style="letter-spacing:-0.097px">Propietario</span><span class="sort">&#8645;</span></th><th><span style="letter-spacing:-0.018px">Cuenta</span><span class="sort">&#8645;</span></th><th><span style="letter-spacing:-0.278px">Ciudad</span><span class="sort">&#8645;</span></th><th><span style="letter-spacing:-0.203px">Provincia</span><span class="sort">&#8645;</span></th><th><span style="letter-spacing:-0.176px">Codigo Postal</span><span class="sort">&#8645;</span></th><th><span style="letter-spacing:-0.034px">Importe</span><span class="sort">&#8645;</span></th><th><span style="letter-spacing:-0.08px">Cantidad</span><span class="sort">&#8645;</span></th></tr></thead><tbody>
<tr><td><span style="letter-spacing:0.565px">Maria Lopez</span></td><td><a style="letter-spacing:0.146px">CHOCOLATES DOMINGUEZ SL</a></td><td><span style="letter-spacing:0.444px">Zaragoza</span></td><td><span style="letter-spacing:0.721px">Aragon</span></td><td><span style="letter-spacing:0.625px">50001</span></td><td><span style="letter-spacing:0.309px">2355.61</span></td><td><span style="letter-spacing:-0.8px">118</span></td></tr>
<tr><td><span style="letter-spacing:0.565px">Maria Lopez</span></td><td><a style="letter-spacing:0.086px">TIENDA DE GOLOSINAS DIAZ SL</a></td><td><span style="letter-spacing:0.444px">Zaragoza</span></td><td><span style="letter-spacing:0.721px">Aragon</span></td><td><span style="letter-spacing:0.625px">50001</span></td><td><span style="letter-spacing:0.212px">512.66</span></td><td><span style="letter-spacing:-0.8px">14</span></td></tr>
<tr><td><span style="letter-spacing:0.56px">Laura Martinez</span></td><td><a style="letter-spacing:-0.072px">TIENDA DE GOLOSINAS TORRES SL</a></td><td><span style="letter-spacing:0.494px">Barcelona</span></td><td><span style="letter-spacing:0.422px">Cataluna</span></td><td><span style="letter-spacing:0.625px">08001</span></td><td><span style="letter-spacing:0.812px">265.29</span></td><td><span style="letter-spacing:1.203px">24</span></td></tr>
<tr><td><span style="letter-spacing:0.56px">Laura Martinez</span></td><td><a style="letter-spacing:-0.054px">EL SABOR DE MADRID SL</a></td><td><span style="letter-spacing:0.444px">Zaragoza</span></td><td><span style="letter-spacing:0.721px">Aragon</span></td><td><span style="letter-spacing:0.625px">50001</span></td><td><span style="letter-spacing:0.872px">242.36</span></td><td><span style="">5</span></td></tr>
<tr><td><span style="letter-spacing:0.565px">Maria Lopez</span></td><td><a style="letter-spacing:0.022px">CONFITERIA DEL CENTRO SL</a></td><td><span style="letter-spacing:0.494px">Barcelona</span></td><td><span style="letter-spacing:0.422px">Cataluna</span></td><td><span style="letter-spacing:0.625px">08001</span></td><td><span style="letter-spacing:-0.028px">123.72</span></td><td><span style="">4</span></td></tr>
<tr><td><span style="letter-spacing:0.562px">Javier Rodriguez</span></td><td><a style="letter-spacing:-0.037px">MORENO DEL CENTRO SL</a></td><td><span style="letter-spacing:0.444px">Zaragoza</span></td><td><span style="letter-spacing:0.721px">Aragon</span></td><td><span style="letter-spacing:0.625px">50001</span></td><td><span style="letter-spacing:-0.308px">120.01</span></td><td><span style="">3</span></td></tr>
<tr><td><span style="letter-spacing:0.56px">Laura Martinez</span></td><td><a style="letter-spacing:0.088px">PASTELERIA JIMENEZ SL</a></td><td><span style="letter-spacing:0.503px">Bilbao</span></td><td><span style="letter-spacing:0.427px">Pais Vasco</span></td><td><span style="letter-spacing:0.625px">48001</span></td><td><span style="letter-spacing:-0.8px">118.19</span></td><td><span style="">2</span></td></tr>
</tbody></table>
<div class="abs" style="left:1488.3px;top:761.4px;width:94.5px;height:31.5px;border:1px solid #f0eeea;border-radius:6px;background:#fff"></div>
<span style="position:absolute;left:1504.7px;top:766.6px;height:23px;line-height:23px;font-size:16.2px;font-weight:400;color:#9ca3af;letter-spacing:0.659px;white-space:pre;">Anterior</span>
<span style="position:absolute;left:1599.8px;top:766.6px;height:23px;line-height:23px;font-size:16.2px;font-weight:400;color:#475569;letter-spacing:0.428px;white-space:pre;">Mostrando 1-7 de 7 registros</span>
<div class="abs" style="left:1835.4px;top:761.4px;width:104.3px;height:31.5px;border:1px solid #f0eeea;border-radius:6px;background:#fff"></div>
<span style="position:absolute;left:1852.0px;top:766.6px;height:23px;line-height:23px;font-size:16.2px;font-weight:400;color:#9ca3af;letter-spacing:0.373px;white-space:pre;">Siguiente</span>
</div>
</body></html>
